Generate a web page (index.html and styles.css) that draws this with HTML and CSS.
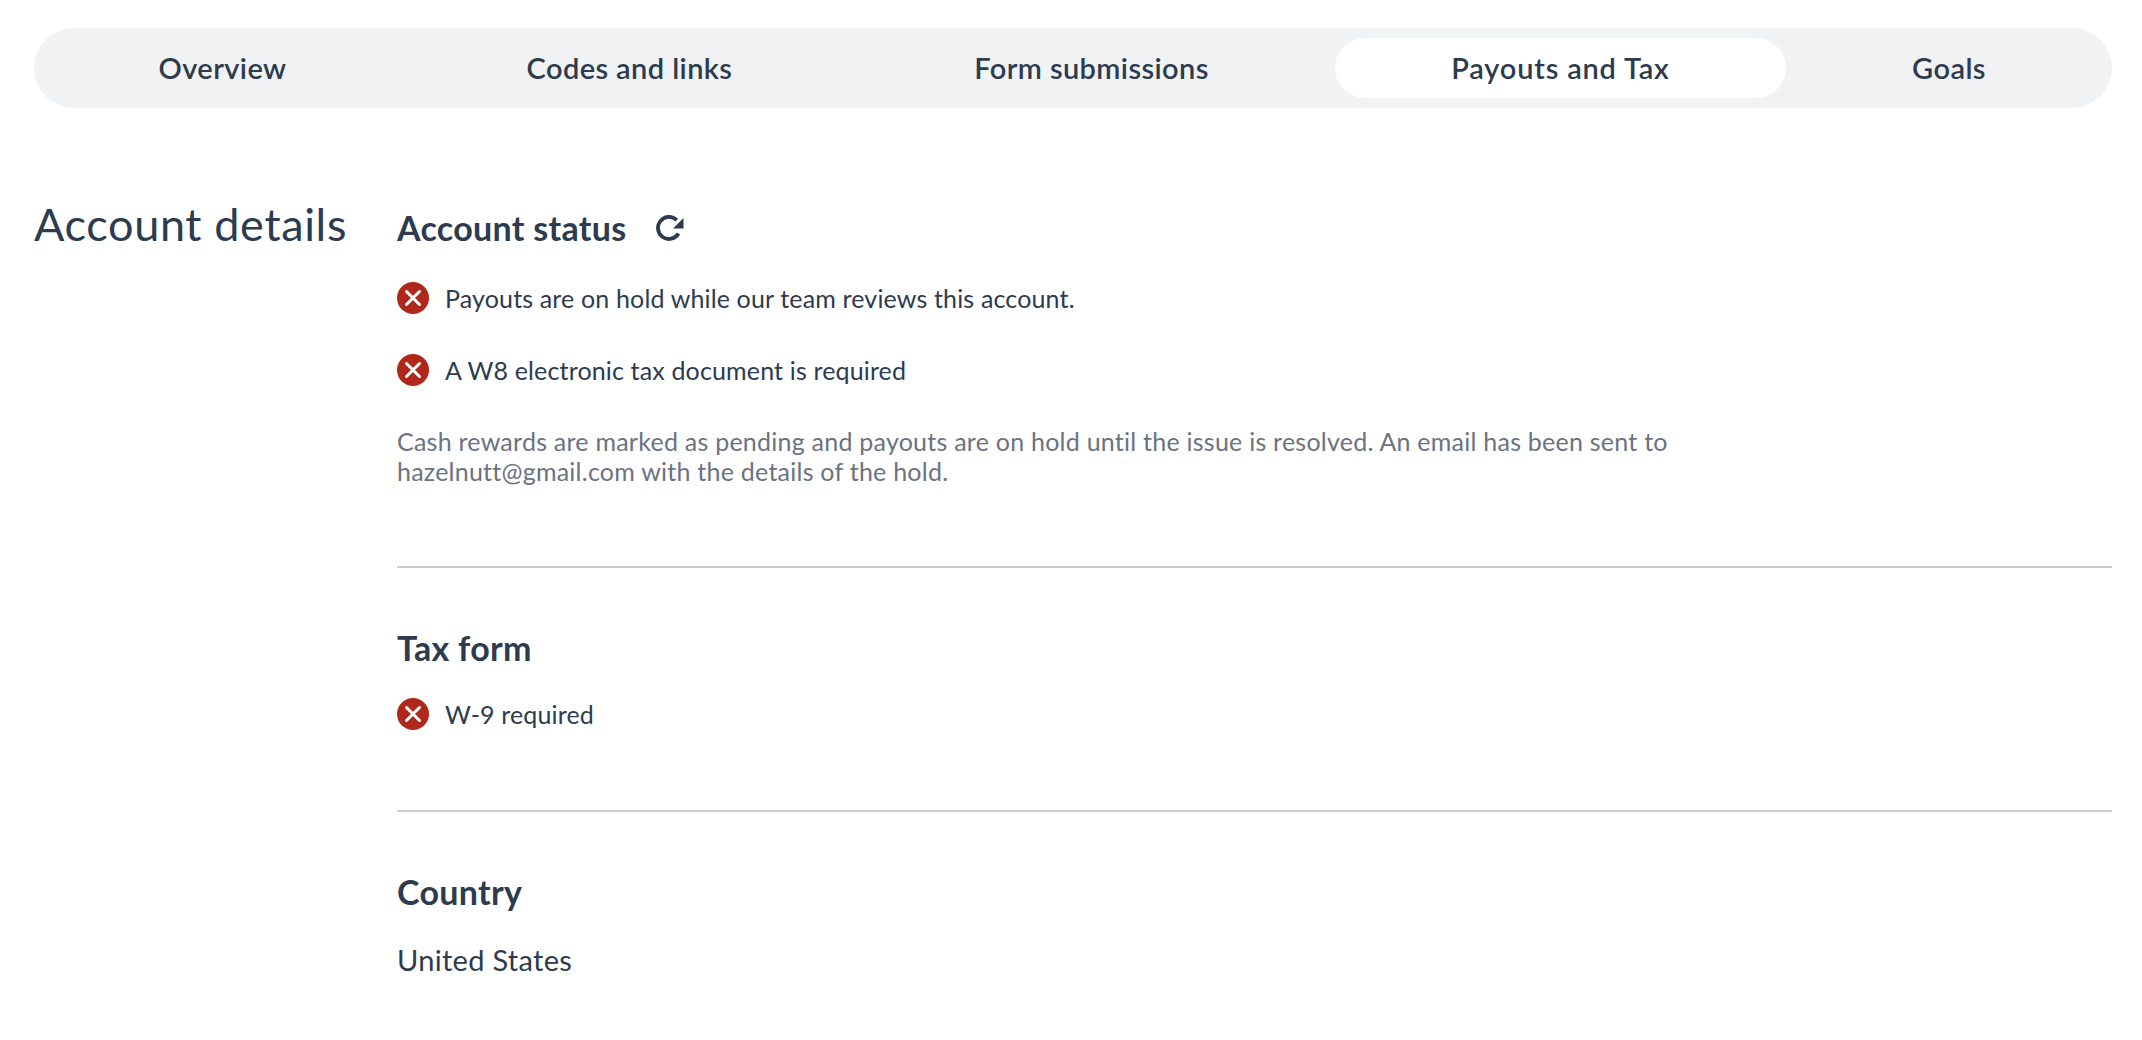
FILE: index.html
```html
<!DOCTYPE html>
<html lang="en">
<head>
    <meta charset="UTF-8">
    <meta name="viewport" content="width=device-width, initial-scale=1.0">
    <title>Payouts and Tax</title>
    <link rel="stylesheet" href="styles.css">
</head>
<body>
    <nav class="tabs">
        <a class="tab" href="#">Overview</a>
        <a class="tab" href="#">Codes and links</a>
        <a class="tab" href="#">Form submissions</a>
        <a class="tab active" href="#">Payouts and Tax</a>
        <a class="tab" href="#">Goals</a>
    </nav>

    <main class="account">
        <h1 class="account-title">Account details</h1>

        <div class="account-body">
            <section class="block block-status">
                <h2 class="block-title">
                    Account status
                    <button type="button" class="refresh" aria-label="Refresh">
                        <svg viewBox="0 0 28 26" width="28" height="26">
                            <path d="M22.5 18.5A11 11 0 1 1 20.8 5.2" fill="none" stroke="#2d3b4e" stroke-width="3.8"/>
                            <path d="M27.5 3V13.5H17Z" fill="#2d3b4e"/>
                        </svg>
                    </button>
                </h2>
                <div class="status-row">
                    <svg class="x-icon" viewBox="0 0 32 32" width="32" height="32"><circle cx="16" cy="16" r="16" fill="#b0281a"/><path d="M9.5 9.5L22.5 22.5M22.5 9.5L9.5 22.5" stroke="#fff" stroke-width="3" stroke-linecap="round"/></svg>
                    <span>Payouts are on hold while our team reviews this account.</span>
                </div>
                <div class="status-row">
                    <svg class="x-icon" viewBox="0 0 32 32" width="32" height="32"><circle cx="16" cy="16" r="16" fill="#b0281a"/><path d="M9.5 9.5L22.5 22.5M22.5 9.5L9.5 22.5" stroke="#fff" stroke-width="3" stroke-linecap="round"/></svg>
                    <span>A W8 electronic tax document is required</span>
                </div>
                <p class="note">Cash rewards are marked as pending and payouts are on hold until the issue is resolved. An email has been sent to hazelnutt@gmail.com with the details of the hold.</p>
            </section>

            <section class="block block-tax">
                <h2 class="block-title">Tax form</h2>
                <div class="status-row">
                    <svg class="x-icon" viewBox="0 0 32 32" width="32" height="32"><circle cx="16" cy="16" r="16" fill="#b0281a"/><path d="M9.5 9.5L22.5 22.5M22.5 9.5L9.5 22.5" stroke="#fff" stroke-width="3" stroke-linecap="round"/></svg>
                    <span>W-9 required</span>
                </div>
            </section>

            <section class="block block-country">
                <h2 class="block-title">Country</h2>
                <p class="country">United States</p>
            </section>
        </div>
    </main>
</body>
</html>
```

FILE: styles.css
```css
body {
    margin: 0;
    padding: 28px 30px 0 34px;
    background: #fff;
    color: #2d3b4e;
    font-family: Lato, "Noto Sans", sans-serif;
}

.tabs {
    display: grid;
    grid-template-columns: 357px 437px 467px 451px 306px;
    gap: 10px;
    height: 60px;
    padding: 10px;
    background: #f1f2f4;
    border-radius: 40px;
}

.tab {
    display: flex;
    align-items: center;
    justify-content: center;
    padding-bottom: 2px;
    border-radius: 30px;
    color: #2d3b4e;
    font-size: 29px;
    font-weight: 600;
    letter-spacing: 0.4px;
    text-decoration: none;
}

.tab.active {
    background: #fff;
    letter-spacing: 0.8px;
}

.account {
    display: flex;
    margin-top: 88px;
}

.account-title {
    width: 363px;
    flex: none;
    margin: 0;
    font-size: 45px;
    font-weight: 400;
    line-height: 56px;
    letter-spacing: 0.65px;
}

.account-body {
    flex: 1;
}

.block {
    box-sizing: border-box;
    border-bottom: 2px solid #c9cbcf;
}

.block:last-child {
    border-bottom: none;
}

.block-status {
    height: 372px;
    padding-top: 12px;
}

.block-status .block-title {
    margin-bottom: 34px;
}

.block-tax {
    height: 244px;
    padding-top: 60px;
}

.block-country {
    padding-top: 60px;
}

.block-title {
    display: flex;
    align-items: center;
    margin: 0 0 30px;
    font-size: 34px;
    font-weight: 700;
    line-height: 40px;
    letter-spacing: 0.3px;
}

.refresh {
    display: flex;
    margin-left: 30px;
    padding: 0;
    border: none;
    background: none;
    cursor: pointer;
}

.status-row {
    display: flex;
    align-items: center;
    gap: 16px;
    height: 32px;
    margin-bottom: 40px;
    color: #2d3b4e;
    font-size: 25px;
    letter-spacing: 0.15px;
}

.x-icon {
    flex: none;
}

.note {
    width: 1290px;
    margin: 0;
    color: #6b7280;
    font-size: 25px;
    line-height: 30px;
    letter-spacing: 0.24px;
}

.country {
    margin: 0;
    font-size: 29px;
    letter-spacing: 0.3px;
}
```
